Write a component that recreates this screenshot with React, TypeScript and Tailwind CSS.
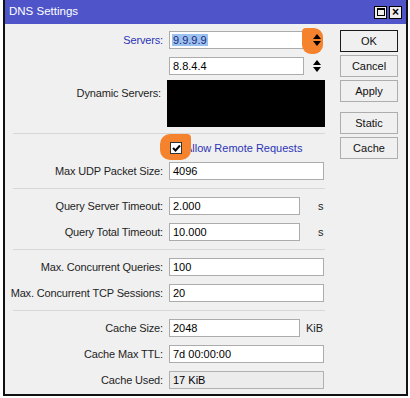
export default function App() {
  const font = { fontFamily: '"Liberation Sans", Arial, sans-serif' }

  function Label({ text, blue }: { text: string; blue?: boolean }) {
    return (
      <div
        className={`w-[164px] shrink-0 pr-[6px] text-right tracking-[-0.15px] ${
          blue ? "text-[#2d35b6]" : "text-[#1e1e1e]"
        }`}
      >
        {text}
      </div>
    )
  }

  function Field({ value, width, readOnly }: { value: string; width: string; readOnly?: boolean }) {
    return (
      <div
        className={`${width} h-[18px] border pl-[3px] leading-[16px] text-black ${
          readOnly ? "bg-[#ececec] border-[#b0b0b0]" : "bg-white border-[#acacac]"
        }`}
      >
        {value}
      </div>
    )
  }

  function Arrows() {
    return (
      <div className="relative z-10 flex w-[9px] flex-col items-center gap-[2px]">
        <div className="h-0 w-0 border-x-[4.5px] border-b-[5px] border-x-transparent border-b-black" />
        <div className="h-0 w-0 border-x-[4.5px] border-t-[5px] border-x-transparent border-t-black" />
      </div>
    )
  }

  function Sep() {
    return <div className="my-[8px] ml-[8px] h-px w-[312px] bg-[#d7d7d7]" />
  }

  const btn = "h-[22px] w-[58px] border bg-[#f0f0f0] text-center leading-[20px] text-[#111]"

  return (
    <div className="h-[398px] w-[410px] bg-white text-[11px]" style={font}>
      <div className="ml-[3px] flex h-[396px] w-[405px] flex-col border-x-2 border-b-2 border-[#111] bg-[#f0f0f0]">
        {/* title bar */}
        <div className="flex h-[24px] items-center bg-[#4f55c9] pl-[4px] pr-[4px]">
          <span className="text-[11.5px] text-white">DNS Settings</span>
          <div className="ml-auto flex gap-[2px]">
            <div className="flex h-[13px] w-[13px] items-center justify-center border border-black bg-[#eeeeee]">
              <div className="h-[8px] w-[8px] border border-black border-t-2" />
            </div>
            <div className="flex h-[13px] w-[13px] items-center justify-center border border-black bg-[#eeeeee] text-[12px] font-bold leading-none text-black">
              ×
            </div>
          </div>
        </div>

        <div className="flex">
          {/* form */}
          <div className="w-[325px] pt-[7px]">
            <div className="flex items-center">
              <Label text="Servers:" blue />
              <div className="h-[18px] w-[135px] border border-[#acacac] bg-white pl-[2px] pt-[1px] leading-[14px]">
                <span className="bg-[#9cc1ef] px-px text-[#1b2a7a]">9.9.9.9</span>
              </div>
              <div className="relative ml-[8px]">
                <div className="absolute -left-[10px] -top-[6px] h-[26px] w-[21px] rounded-[9px] rounded-tl-[4px] bg-[#f5822c]" />
                <Arrows />
              </div>
            </div>
            <div className="mt-[8px] flex items-center">
              <Label text="" />
              <Field value="8.8.4.4" width="w-[135px]" />
              <div className="ml-[8px]">
                <Arrows />
              </div>
            </div>
            <div className="mt-[5px] flex">
              <div className="w-[162px] shrink-0 pr-[6px] pt-[5px] text-right tracking-[-0.15px] text-[#1e1e1e]">
                Dynamic Servers:
              </div>
              <div className="h-[47px] w-[158px] bg-black" />
            </div>
            <div className="mt-[6px] ml-[8px] h-px w-[312px] bg-[#d7d7d7]" />
            <div className="mt-[8px] flex h-[12px] items-center">
              <div className="relative ml-[165px]">
                <div className="absolute -left-[10px] -top-[8px] h-[26px] w-[31px] rounded-[10px] rounded-tr-[4px] bg-[#f5822c]" />
                <div className="relative z-10 flex h-[12px] w-[12px] items-center justify-center border border-[#333] bg-white">
                  <svg width="9" height="8" viewBox="0 0 9 8">
                    <path d="M1 4 L3.5 6.5 L8 1.5" fill="none" stroke="#000" strokeWidth="2" />
                  </svg>
                </div>
              </div>
              <span className="ml-[3px] text-[#2d35b6]">Allow Remote Requests</span>
            </div>
            <div className="mt-[8px] flex items-center">
              <Label text="Max UDP Packet Size:" />
              <Field value="4096" width="w-[155px]" />
            </div>
            <Sep />
            <div className="flex items-center">
              <Label text="Query Server Timeout:" />
              <Field value="2.000" width="w-[131px]" />
              <span className="ml-[18px] text-[#1e1e1e]">s</span>
            </div>
            <div className="mt-[8px] flex items-center">
              <Label text="Query Total Timeout:" />
              <Field value="10.000" width="w-[131px]" />
              <span className="ml-[18px] text-[#1e1e1e]">s</span>
            </div>
            <Sep />
            <div className="flex items-center">
              <Label text="Max. Concurrent Queries:" />
              <Field value="100" width="w-[155px]" />
            </div>
            <div className="mt-[8px] flex items-center">
              <Label text="Max. Concurrent TCP Sessions:" />
              <Field value="20" width="w-[155px]" />
            </div>
            <Sep />
            <div className="flex items-center">
              <Label text="Cache Size:" />
              <Field value="2048" width="w-[131px]" />
              <span className="ml-[6px] text-[#1e1e1e]">KiB</span>
            </div>
            <div className="mt-[8px] flex items-center">
              <Label text="Cache Max TTL:" />
              <Field value="7d 00:00:00" width="w-[155px]" />
            </div>
            <div className="mt-[8px] flex items-center">
              <Label text="Cache Used:" />
              <Field value="17 KiB" width="w-[155px]" readOnly />
            </div>
          </div>

          {/* buttons */}
          <div className="ml-[10px] flex flex-col pt-[6px]">
            <div className={`${btn} border-[#1a1a1a]`}>OK</div>
            <div className={`${btn} mt-[3px] border-[#adadad]`}>Cancel</div>
            <div className={`${btn} mt-[3px] border-[#adadad]`}>Apply</div>
            <div className={`${btn} mt-[10px] border-[#adadad]`}>Static</div>
            <div className={`${btn} mt-[3px] border-[#adadad]`}>Cache</div>
          </div>
        </div>
      </div>
    </div>
  )
}
